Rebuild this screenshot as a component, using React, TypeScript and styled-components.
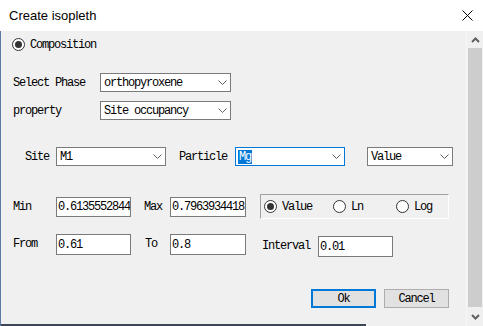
import * as React from 'react';
import styled, { createGlobalStyle } from 'styled-components';

const GlobalStyle = createGlobalStyle`
  html, body {
    margin: 0;
    padding: 0;
    overflow: hidden;
    background: #f0f0f0;
  }
`;

const Window = styled.div`
  width: 483px;
  height: 326px;
  display: flex;
  flex-direction: column;
  background: #f0f0f0;
  overflow: hidden;
`;

const TitleBar = styled.div`
  height: 31px;
  flex: none;
  display: flex;
  align-items: center;
  justify-content: space-between;
  padding-left: 9px;
  padding-right: 10px;
  background: #fff;
  font-family: 'Liberation Sans', Arial, sans-serif;
  font-size: 13px;
  color: #000;
`;

const CloseButton = styled.div`
  width: 11px;
  height: 11px;
  display: flex;
  margin-top: -1px;
`;

const Main = styled.div`
  flex: 1;
  display: flex;
  border-left: 1px solid #5b7aa3;
  min-height: 0;
`;

const Content = styled.div`
  flex: 1;
  display: flex;
  flex-direction: column;
  font-family: 'Liberation Mono', 'Courier New', monospace;
  font-size: 12px;
  letter-spacing: -1.2px;
  color: #000;
`;

const Row = styled.div<{ $mt: number; $h: number; $pl: number; $align?: string }>`
  display: flex;
  align-items: ${(p) => p.$align || 'center'};
  margin-top: ${(p) => p.$mt}px;
  height: ${(p) => p.$h}px;
  padding-left: ${(p) => p.$pl}px;
  flex: none;
`;

const Label = styled.span<{ $w: number; $ml?: number; $lh?: number }>`
  width: ${(p) => p.$w}px;
  margin-left: ${(p) => p.$ml || 0}px;
  line-height: ${(p) => (p.$lh ? `${p.$lh}px` : 'normal')};
  flex: none;
  white-space: nowrap;
`;

const Combo = styled.div<{ $w: number; $ml?: number; $focus?: boolean }>`
  box-sizing: border-box;
  width: ${(p) => p.$w}px;
  height: 19px;
  margin-left: ${(p) => p.$ml || 0}px;
  flex: none;
  display: flex;
  align-items: center;
  justify-content: space-between;
  padding: 0 3px 0 2px;
  background: #fff;
  border: 1px solid ${(p) => (p.$focus ? '#0078d7' : '#7a7a7a')};
`;

const ComboText = styled.span<{ $selected?: boolean }>`
  padding: 0 1px;
  line-height: 14px;
  background: ${(p) => (p.$selected ? '#0078d7' : 'transparent')};
  color: ${(p) => (p.$selected ? '#fff' : '#000')};
`;

const Input = styled.div<{ $w: number; $h?: number; $ml?: number; $mt?: number }>`
  box-sizing: border-box;
  width: ${(p) => p.$w}px;
  height: ${(p) => p.$h || 20}px;
  margin-left: ${(p) => p.$ml || 0}px;
  margin-top: ${(p) => p.$mt || 0}px;
  flex: none;
  display: flex;
  align-items: center;
  padding-left: 1px;
  background: #fff;
  border: 1px solid #7a7a7a;
  overflow: hidden;
  white-space: nowrap;
`;

const RadioRow = styled.label<{ $w?: number }>`
  display: flex;
  align-items: center;
  gap: 5px;
  width: ${(p) => (p.$w ? `${p.$w}px` : 'auto')};
  flex: none;
`;

const RadioCircle = styled.span<{ $checked?: boolean }>`
  box-sizing: border-box;
  width: 13px;
  height: 13px;
  border-radius: 50%;
  border: 1px solid #333;
  background: #fff;
  display: flex;
  align-items: center;
  justify-content: center;
  flex: none;

  &::after {
    content: '';
    width: 7px;
    height: 7px;
    border-radius: 50%;
    background: ${(p) => (p.$checked ? '#333' : 'transparent')};
  }
`;

const GroupBox = styled.div`
  box-sizing: border-box;
  width: 189px;
  height: 25px;
  margin-left: 14px;
  display: flex;
  align-items: center;
  padding-left: 3px;
  border-top: 1px solid #a0a0a0;
  border-left: 1px solid #a0a0a0;
  border-right: 1px solid #fff;
  border-bottom: 1px solid #fff;
`;

const Button = styled.div<{ $default?: boolean; $ml?: number }>`
  box-sizing: border-box;
  width: 65px;
  height: 19px;
  margin-left: ${(p) => p.$ml || 0}px;
  display: flex;
  align-items: center;
  justify-content: center;
  background: #e1e1e1;
  border: ${(p) => (p.$default ? '2px solid #0078d7' : '1px solid #adadad')};
`;

const BottomEdge = styled.div`
  margin-top: auto;
  height: 2px;
  width: 365px;
  background: #3c4656;
`;

const ScrollBar = styled.div`
  width: 17px;
  flex: none;
  display: flex;
  flex-direction: column;
  background: #f0f0f0;
  border-left: 1px solid #f8f8f8;
  box-sizing: border-box;
`;

const ScrollArrow = styled.div<{ $h: number }>`
  height: ${(p) => p.$h}px;
  display: flex;
  align-items: center;
  justify-content: center;
  flex: none;
`;

const ScrollThumb = styled.div`
  flex: 1;
  margin: 0 1px;
  background: #cdcdcd;
`;

const Chevron = () => (
  <svg width="9" height="5" viewBox="0 0 9 5">
    <path d="M0.5 0.5 L4.5 4.5 L8.5 0.5" fill="none" stroke="#606060" strokeWidth="1" />
  </svg>
);

const ScrollChevron = ({ up }: { up?: boolean }) => (
  <svg width="9" height="6" viewBox="0 0 9 6">
    <path
      d={up ? 'M1 5 L4.5 1.5 L8 5' : 'M1 1 L4.5 4.5 L8 1'}
      fill="none"
      stroke="#606060"
      strokeWidth="2"
    />
  </svg>
);

export default function App() {
  return (
    <>
      <GlobalStyle />
      <Window>
        <TitleBar>
          <span>Create isopleth</span>
          <CloseButton>
            <svg width="11" height="11" viewBox="0 0 11 11">
              <path d="M0.5 0.5 L10.5 10.5 M10.5 0.5 L0.5 10.5" stroke="#000" strokeWidth="1" />
            </svg>
          </CloseButton>
        </TitleBar>
        <Main>
          <Content>
            <Row $mt={7} $h={13} $pl={11}>
              <RadioRow>
                <RadioCircle $checked />
                <span>Composition</span>
              </RadioRow>
            </Row>

            <Row $mt={22} $h={19} $pl={12}>
              <Label $w={87}>Select Phase</Label>
              <Combo $w={131}>
                <ComboText>orthopyroxene</ComboText>
                <Chevron />
              </Combo>
            </Row>

            <Row $mt={9} $h={19} $pl={12}>
              <Label $w={87}>property</Label>
              <Combo $w={131}>
                <ComboText>Site occupancy</ComboText>
                <Chevron />
              </Combo>
            </Row>

            <Row $mt={27} $h={19} $pl={24}>
              <Label $w={31}>Site</Label>
              <Combo $w={110}>
                <ComboText>M1</ComboText>
                <Chevron />
              </Combo>
              <Label $w={56} $ml={13}>Particle</Label>
              <Combo $w={110} $focus>
                <ComboText $selected>Mg</ComboText>
                <Chevron />
              </Combo>
              <Combo $w={86} $ml={22}>
                <ComboText>Value</ComboText>
                <Chevron />
              </Combo>
            </Row>

            <Row $mt={28} $h={25} $pl={12}>
              <Label $w={43}>Min</Label>
              <Input $w={75}>0.6135552844</Input>
              <Label $w={26} $ml={13}>Max</Label>
              <Input $w={76}>0.7963934418</Input>
              <GroupBox>
                <RadioRow $w={69}>
                  <RadioCircle $checked />
                  <span>Value</span>
                </RadioRow>
                <RadioRow $w={63}>
                  <RadioCircle />
                  <span>Ln</span>
                </RadioRow>
                <RadioRow>
                  <RadioCircle />
                  <span>Log</span>
                </RadioRow>
              </GroupBox>
            </Row>

            <Row $mt={15} $h={23} $pl={12} $align="flex-start">
              <Label $w={43} $lh={21}>From</Label>
              <Input $w={75} $h={21}>0.61</Input>
              <Label $w={25} $ml={14} $lh={21}>To</Label>
              <Input $w={76} $h={21}>0.8</Input>
              <Label $w={56} $ml={16} $lh={25}>Interval</Label>
              <Input $w={75} $h={21} $mt={2}>0.01</Input>
            </Row>

            <Row $mt={32} $h={19} $pl={310}>
              <Button $default>Ok</Button>
              <Button $ml={8}>Cancel</Button>
            </Row>

            <BottomEdge />
          </Content>
          <ScrollBar>
            <ScrollArrow $h={17}>
              <ScrollChevron up />
            </ScrollArrow>
            <ScrollThumb />
            <ScrollArrow $h={19}>
              <ScrollChevron />
            </ScrollArrow>
          </ScrollBar>
        </Main>
      </Window>
    </>
  );
}
